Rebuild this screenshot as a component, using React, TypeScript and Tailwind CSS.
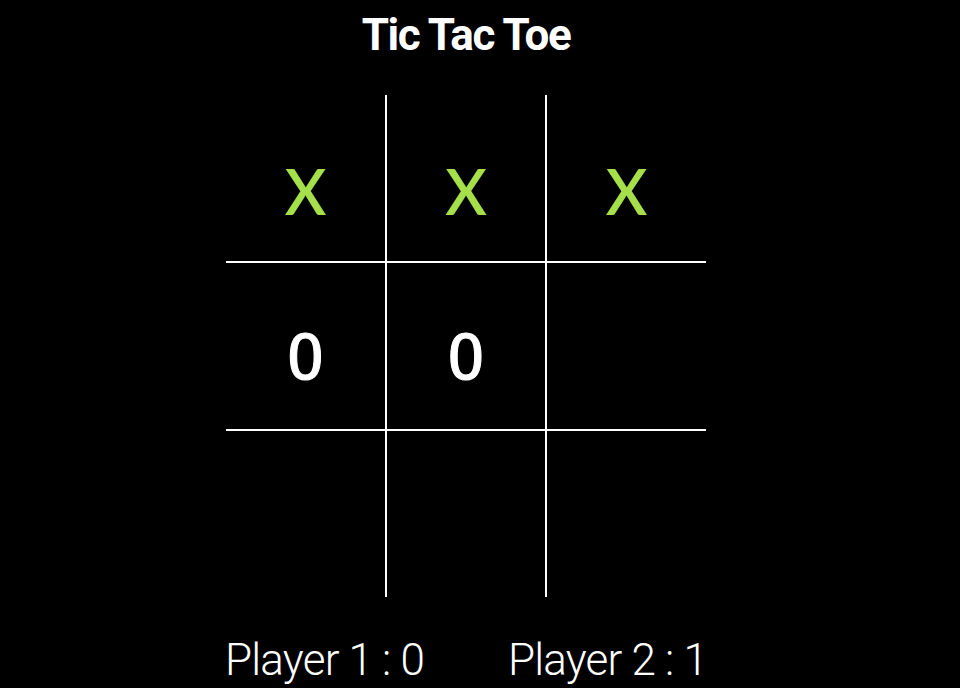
import React from "react";

type Mark = "X" | "O" | "";

const board: Mark[] = ["X", "X", "X", "O", "O", "", "", "", ""];

function Cell({ v }: { v: Mark }) {
  return (
    <div className="bg-black flex justify-center items-start pt-[64px]">
      {v === "X" && (
        <span className="text-[63px] leading-[63px] font-semibold text-[#a5e04b] font-['Lato',sans-serif]">
          X
        </span>
      )}
      {v === "O" && (
        <span className="text-[62px] leading-[62px] font-normal text-white font-['DejaVu_Sans_Mono',monospace] [-webkit-text-stroke:1px_white]">
          O
        </span>
      )}
    </div>
  );
}

export default function App() {
  return (
    <div className="w-full h-[688px] bg-black text-white overflow-hidden">
      <div className="w-[932px] flex flex-col items-center">
        <div className="h-[95px] pt-[13px]">
          <h1 className="text-[44px] leading-[44px] font-bold tracking-[-1.4px] font-['Roboto',sans-serif]">
            Tic Tac Toe
          </h1>
        </div>
        <div className="grid grid-cols-[159px_158px_159px] grid-rows-[166px_166px_166px] gap-[2px] bg-white">
          {board.map((v, i) => (
            <Cell key={i} v={v} />
          ))}
        </div>
        <div className="w-[482px] flex justify-between pt-[41px] text-[44px] leading-[44px] font-light tracking-[-0.8px] font-['Roboto',sans-serif]">
          <span>Player 1 : 0</span>
          <span>Player 2 : 1</span>
        </div>
      </div>
    </div>
  );
}
